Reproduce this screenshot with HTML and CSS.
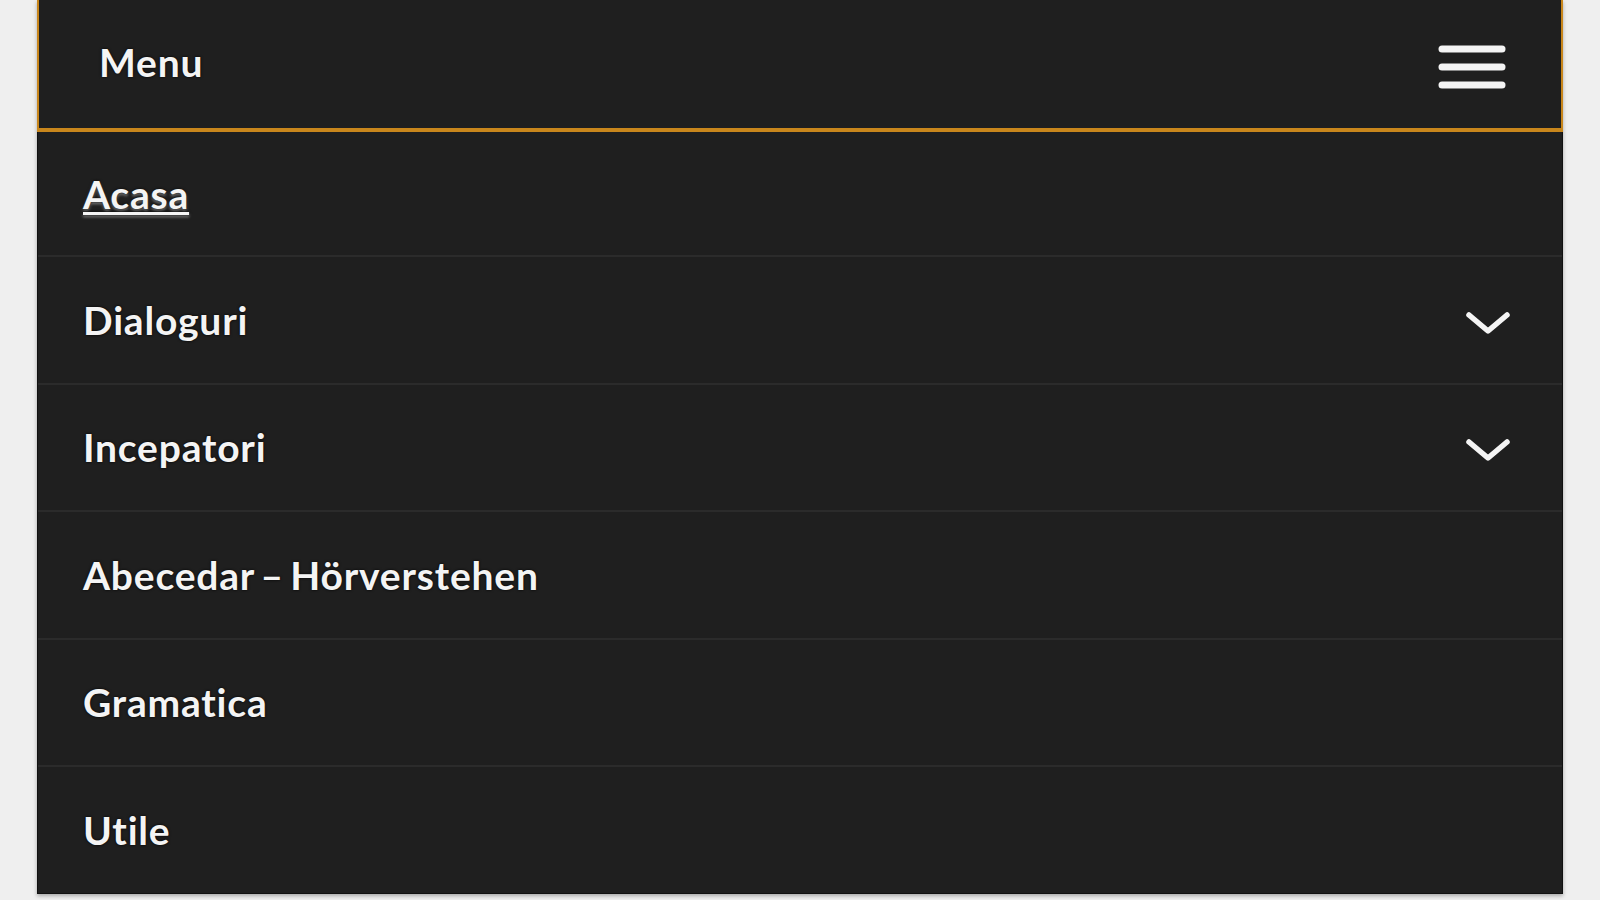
FILE: index.html
```html
<!DOCTYPE html>
<html lang="ro">
<head>
<meta charset="utf-8">
<title>Menu</title>
<link rel="stylesheet" href="styles.css">
</head>
<body>
<nav class="panel">
  <div class="header">
    <span class="header-title">Menu</span>
    <svg class="burger" width="70" height="46" viewBox="0 0 70 46" aria-hidden="true">
      <g stroke="#f4f4f4" stroke-width="7" stroke-linecap="round">
        <line x1="5" y1="5" x2="65" y2="5"/>
        <line x1="5" y1="23" x2="65" y2="23"/>
        <line x1="5" y1="41" x2="65" y2="41"/>
      </g>
    </svg>
  </div>
  <ul class="items">
    <li class="item first"><a class="link current" href="#">Acasa</a></li>
    <li class="item"><a class="link" href="#">Dialoguri</a>
      <svg class="chev" width="48" height="30" viewBox="0 0 48 30" aria-hidden="true"><polyline points="5,7 24,23 43,7" fill="none" stroke="#f4f4f4" stroke-width="5.5" stroke-linecap="round" stroke-linejoin="round"/></svg>
    </li>
    <li class="item"><a class="link" href="#">Incepatori</a>
      <svg class="chev" width="48" height="30" viewBox="0 0 48 30" aria-hidden="true"><polyline points="5,7 24,23 43,7" fill="none" stroke="#f4f4f4" stroke-width="5.5" stroke-linecap="round" stroke-linejoin="round"/></svg>
    </li>
    <li class="item"><a class="link" href="#">Abecedar – Hörverstehen</a></li>
    <li class="item"><a class="link" href="#">Gramatica</a></li>
    <li class="item last"><a class="link" href="#">Utile</a></li>
  </ul>
</nav>
</body>
</html>
```

FILE: styles.css
```css
html, body {
  margin: 0;
  padding: 0;
  background: #efefef;
  height: 900px;
  overflow: hidden;
}
body {
  font-family: Lato, "Open Sans", "Liberation Sans", sans-serif;
  padding: 0 37px 0 37px;
}
.panel {
  background: #1f1f1f;
  border: 1px solid #111;
  border-top: none;
  box-shadow: 0 2px 4px rgba(0,0,0,0.3);
}
.header {
  height: 128px;
  display: flex;
  align-items: center;
  justify-content: space-between;
  border: 2px solid #c8861c;
  border-top: none;
  border-bottom-width: 4px;
  margin: 0 -1px;
  padding: 0 54px 0 60px;
}
.header-title {
  color: #f4f4f4;
  font-size: 39px;
  font-weight: 700;
  letter-spacing: 0.8px;
  text-shadow: 0 0 3px #000;
  margin-top: -4px;
}
.burger {
  display: block;
  margin-top: 6px;
}
.items {
  list-style: none;
  margin: 0;
  padding: 0;
}
.item {
  height: 125.5px;
  border-bottom: 2px solid #2b2b2b;
  display: flex;
  align-items: center;
  justify-content: space-between;
  padding: 0 50px 0 45px;
}
.item.first {
  height: 123px;
}
.item.last {
  border-bottom: none;
  height: 126px;
}
.link {
  color: #f4f4f4;
  font-size: 39px;
  font-weight: 700;
  letter-spacing: 0.8px;
  word-spacing: -4px;
  text-decoration: none;
  text-shadow: 0 0 3px #000;
}
.link.current {
  text-decoration: underline;
  text-decoration-thickness: 3px;
  text-underline-offset: 3px;
  text-shadow: 0 0 3px #000, 0 2px 3px #888;
}
.chev {
  display: block;
  margin-top: 6px;
}
```
